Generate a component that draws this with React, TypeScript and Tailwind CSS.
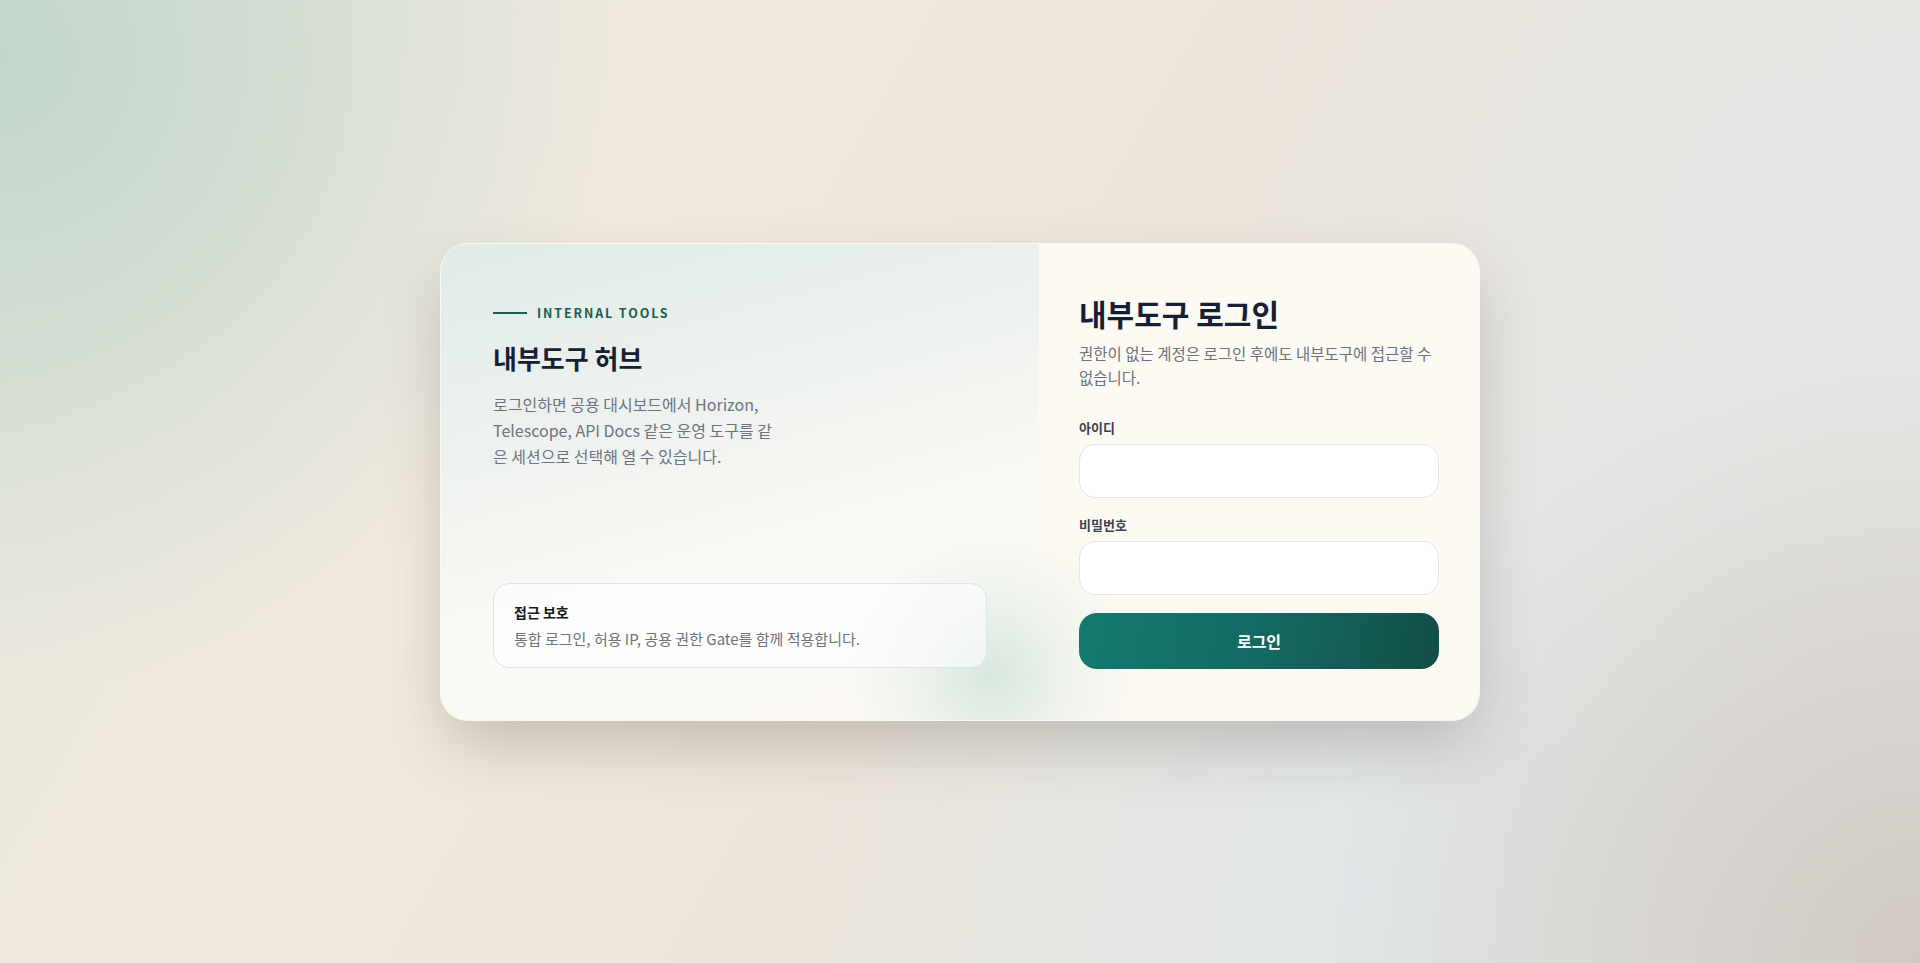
import React from "react";

export default function App() {
  return (
    <div
      className="min-h-screen w-full flex items-center justify-center bg-[radial-gradient(circle_at_0%_6%,rgba(188,212,201,0.85),transparent_30%),radial-gradient(circle_at_100%_100%,rgba(208,200,193,0.95),transparent_28%),radial-gradient(circle_at_72%_92%,rgba(224,230,232,0.95),transparent_38%),radial-gradient(circle_at_95%_25%,rgba(228,229,228,0.9),transparent_35%),linear-gradient(120deg,#e6e6dc_0%,#f1e9df_30%,#ece4d9_55%,#e6e5e1_80%,#e2e3e2_100%)]"
      style={{ fontFamily: '"Noto Sans CJK KR", "Noto Sans", sans-serif' }}
    >
      <div className="relative w-[1040px] h-[478px] grid grid-cols-[598px_1fr] rounded-[28px] overflow-hidden border border-white/70 shadow-[0_28px_64px_-10px_rgba(70,60,50,0.28)]">
        {/* left intro panel */}
        <div className="flex flex-col justify-between px-[52px] pt-[59px] pb-[52px] bg-[linear-gradient(165deg,#dfebe8_0%,#eef2ee_35%,#fbfaf6_65%,#fcf9f4_100%)]">
          <div className="relative z-10">
            <div className="flex items-center gap-[10px]">
              <span className="block w-[34px] h-[2px] bg-[#1d5c50]" />
              <span className="text-[12.5px] leading-5 font-semibold tracking-[0.15em] text-[#1d5c50]">
                INTERNAL TOOLS
              </span>
            </div>
            <h2 className="mt-[19px] text-[26px] leading-[31px] font-bold text-[#172033]">내부도구 허브</h2>
            <p className="mt-[18px] max-w-[288px] text-[16px] leading-[26px] text-[#6b7280]">
              로그인하면 공용 대시보드에서 Horizon, Telescope, API Docs 같은 운영 도구를 같은 세션으로 선택해 열 수 있습니다.
            </p>
          </div>

          <div className="relative z-10 w-full rounded-2xl border border-[#d6e7e6] bg-white/60 px-5 py-[17px]">
            <p className="text-[14px] leading-[22px] font-bold text-[#111827]">접근 보호</p>
            <p className="mt-[5px] text-[15px] leading-[22px] text-[#6b7280]">
              통합 로그인, 허용 IP, 공용 권한 Gate를 함께 적용합니다.
            </p>
          </div>
        </div>

        {/* login form */}
        <div className="flex flex-col justify-center px-10 bg-[#fdf9f3]">
          <div className="relative z-10">
            <h1 className="text-[30px] leading-9 font-bold text-[#172033]">내부도구 로그인</h1>
            <p className="mt-[10px] text-[15.5px] leading-6 text-[#6b7280]">
              권한이 없는 계정은 로그인 후에도 내부도구에 접근할 수 없습니다.
            </p>

            <form className="mt-[29px] flex flex-col" onSubmit={(e) => e.preventDefault()}>
              <label className="text-[13px] leading-5 font-bold text-[#374151]">아이디</label>
              <input
                type="text"
                className="mt-1.5 h-[54px] w-full rounded-2xl border border-[#e4e5e8] bg-white px-4 outline-none"
              />
              <label className="mt-[17px] text-[13px] leading-5 font-bold text-[#374151]">비밀번호</label>
              <input
                type="password"
                className="mt-1.5 h-[54px] w-full rounded-2xl border border-[#e4e5e8] bg-white px-4 outline-none"
              />
              <button
                type="submit"
                className="mt-[18px] h-[56px] w-full rounded-[18px] bg-[linear-gradient(100deg,#137a70_0%,#136a62_50%,#134e48_100%)] text-[16px] font-bold text-white"
              >
                로그인
              </button>
            </form>
          </div>
        </div>

        {/* soft glow */}
        <div className="pointer-events-none absolute left-[400px] top-[280px] h-[300px] w-[300px] rounded-full bg-[radial-gradient(circle,rgba(185,214,202,0.55)_0%,rgba(205,226,218,0.3)_35%,transparent_68%)]" />
      </div>
    </div>
  );
}
